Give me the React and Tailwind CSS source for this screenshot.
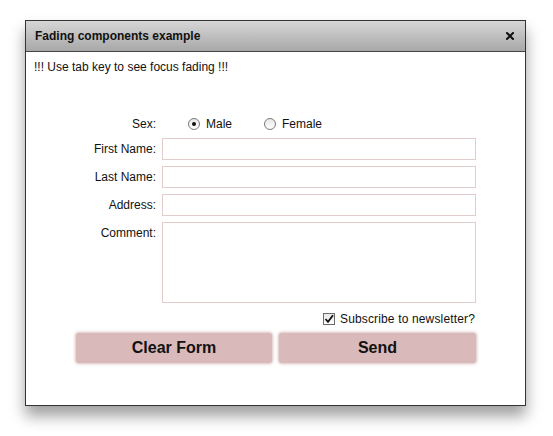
import React from "react";

function Radio({ checked, label }) {
  return (
    <div className="flex items-center">
      <span className="w-[12px] h-[12px] rounded-full border border-[#7a7a7a] bg-gradient-to-b from-[#e8e8e8] to-white flex items-center justify-center">
        {checked && <span className="w-[4px] h-[4px] rounded-full bg-[#111]" />}
      </span>
      <span className="ml-[6px]">{label}</span>
    </div>
  );
}

function Row({ label, tall }) {
  return (
    <div className="flex items-start">
      <div className="w-[122px] text-right pt-[3px] leading-[16px]">{label}</div>
      <div
        className={
          "ml-[6px] w-[314px] border border-[#e2cccc] bg-white " +
          (tall ? "h-[81px]" : "h-[22px]")
        }
      />
    </div>
  );
}

export default function App() {
  return (
    <div
      className="w-[553px] h-[436px] bg-white pt-[20px] pl-[25px] text-[12px] text-[#111]"
      style={{ fontFamily: '"Liberation Sans", Arial, sans-serif' }}
    >
      <div className="w-[501px] h-[386px] border border-[#333] bg-white shadow-[0_10px_14px_rgba(0,0,0,0.38)] flex flex-col">
        <div className="h-[31px] border-b border-[#444] bg-gradient-to-b from-[#d6d6d6] to-[#a8a8a8] flex items-center justify-between pl-[9px] pr-[11px]">
          <span className="font-bold text-[12px]">Fading components example</span>
          <svg width="8" height="8" viewBox="0 0 8 8">
            <path d="M1 1L7 7M7 1L1 7" stroke="#111" strokeWidth="2" strokeLinecap="square" />
          </svg>
        </div>
        <div className="pl-[8px] pt-[8px]">
          <div className="leading-[14px]">!!! Use tab key to see focus fading !!!</div>
          <div className="mt-[42px] flex items-center h-[16px]">
            <div className="w-[122px] text-right">Sex:</div>
            <div className="ml-[32px]">
              <Radio checked label="Male" />
            </div>
            <div className="ml-[32px]">
              <Radio label="Female" />
            </div>
          </div>
          <div className="mt-[6px] flex flex-col gap-[6px]">
            <Row label="First Name:" />
            <Row label="Last Name:" />
            <Row label="Address:" />
            <Row label="Comment:" tall />
          </div>
          <div className="w-[441px] mt-[9px] flex items-center justify-end h-[14px]">
            <span className="w-[12px] h-[12px] border border-[#6b6b6b] bg-gradient-to-b from-[#e8e8e8] to-white flex items-center justify-center">
              <svg width="10" height="10" viewBox="0 0 10 10">
                <path d="M1.5 5L4 7.8L9 1.2" stroke="#111" strokeWidth="1.8" fill="none" />
              </svg>
            </span>
            <span className="ml-[5px] tracking-[0.15px]">Subscribe to newsletter?</span>
          </div>
          <div className="mt-[7px] ml-[42px] flex gap-[7px]">
            <div className="w-[196px] h-[30px] rounded-[3px] bg-[#d9b9b9] shadow-[0_0_3px_1px_#dcc0c0] flex items-center justify-center font-bold text-[16px]">
              Clear Form
            </div>
            <div className="w-[197px] h-[30px] rounded-[3px] bg-[#d9b9b9] shadow-[0_0_3px_1px_#dcc0c0] flex items-center justify-center font-bold text-[16px]">
              Send
            </div>
          </div>
        </div>
      </div>
    </div>
  );
}
